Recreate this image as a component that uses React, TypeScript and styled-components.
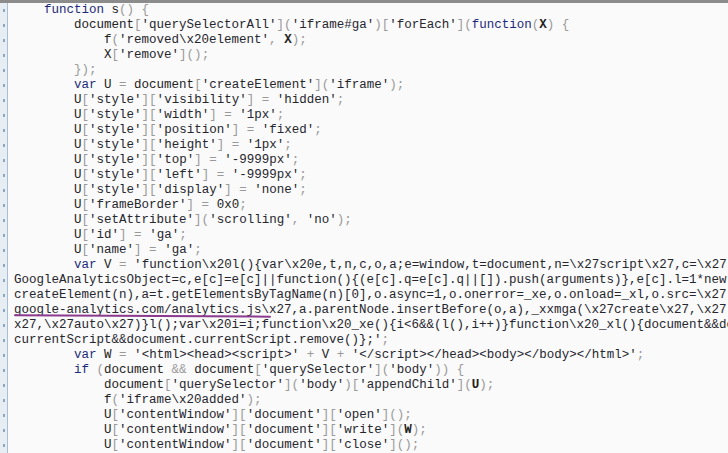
import React from "react";
import styled, { createGlobalStyle, css } from "styled-components";

const Global = createGlobalStyle`
  html, body { margin: 0; padding: 0; background: #fafafa; }
  body { width: 728px; height: 453px; overflow: hidden; }
`;

const Frame = styled.div`
  width: 728px;
  height: 453px;
  box-sizing: border-box;
  border-top: 3px solid #8c8c8c;
  display: flex;
  overflow: hidden;
  background: #fafafa;
`;

const Gutter = styled.div`
  width: 7px;
  flex: none;
  background: #e6edf3;
  border-right: 1px solid #a9bfd3;
  display: flex;
  flex-direction: column;
`;

const Mark = styled.div`
  height: 15px;
  display: flex;
  align-items: center;
  justify-content: center;
  &::before {
    content: "";
    width: 2px;
    height: 3px;
    background: #8fa7bd;
  }
`;

const Code = styled.pre`
  margin: 0;
  padding: 0 0 0 6px;
  flex: 1;
  min-width: 0;
  font-family: "Liberation Mono", "Courier New", monospace;
  font-size: 12.5px;
  line-height: 15px;
  color: #222;
  white-space: pre;
  overflow: hidden;
`;

const Line = styled.div`
  height: 15px;
`;

const Kw = styled.span`
  color: #1c2a7a;
`;

const Str = styled.span`
  color: #26262e;
`;

const Punct = styled.span`
  color: #999;
`;

const Ident = styled.span<{ $bold?: boolean }>`
  color: #222;
  ${(p) =>
    p.$bold &&
    css`
      font-weight: bold;
    `}
`;

const Scribble = styled.span`
  position: relative;
  &::after {
    content: "";
    position: absolute;
    left: 0;
    right: -9px;
    bottom: 0;
    height: 2px;
    border-radius: 1px;
    background: #8b3a8e;
    transform: rotate(0.3deg);
  }
`;

const ind = (n: number) => " ".repeat(n * 4);

const lines: string[] = [
  ind(1) + "function s() {",
  ind(2) + "document['querySelectorAll']('iframe#ga')['forEach'](function(X) {",
  ind(3) + "f('removed\\x20element', X);",
  ind(3) + "X['remove']();",
  ind(2) + "});",
  ind(2) + "var U = document['createElement']('iframe');",
  ind(2) + "U['style']['visibility'] = 'hidden';",
  ind(2) + "U['style']['width'] = '1px';",
  ind(2) + "U['style']['position'] = 'fixed';",
  ind(2) + "U['style']['height'] = '1px';",
  ind(2) + "U['style']['top'] = '-9999px';",
  ind(2) + "U['style']['left'] = '-9999px';",
  ind(2) + "U['style']['display'] = 'none';",
  ind(2) + "U['frameBorder'] = 0x0;",
  ind(2) + "U['setAttribute']('scrolling', 'no');",
  ind(2) + "U['id'] = 'ga';",
  ind(2) + "U['name'] = 'ga';",
  ind(2) +
    "var V = 'function\\x20l(){var\\x20e,t,n,c,o,a;e=window,t=document,n=\\x27script\\x27,c=\\x27",
  "GoogleAnalyticsObject=c,e[c]=e[c]||function(){(e[c].q=e[c].q||[]).push(arguments)},e[c].l=1*new",
  "createElement(n),a=t.getElementsByTagName(n)[0],o.async=1,o.onerror=_xe,o.onload=_xl,o.src=\\x27",
  "google-analytics.com/analytics.js\\x27,a.parentNode.insertBefore(o,a),_xxmga(\\x27create\\x27,\\x27",
  "x27,\\x27auto\\x27)}l();var\\x20i=i;function\\x20_xe(){i<6&&(l(),i++)}function\\x20_xl(){document&&do",
  "currentScript&&document.currentScript.remove()};';",
  ind(2) + "var W = '<html><head><script>' + V + '</script></head><body></body></html>';",
  ind(2) + "if (document && document['querySelector']('body')) {",
  ind(3) + "document['querySelector']('body')['appendChild'](U);",
  ind(3) + "f('iframe\\x20added');",
  ind(3) + "U['contentWindow']['document']['open']();",
  ind(3) + "U['contentWindow']['document']['write'](W);",
  ind(3) + "U['contentWindow']['document']['close']();",
];

type Tok = { kind: "kw" | "str" | "punct" | "id" | "ws"; text: string; bold?: boolean };

const KEYWORDS = new Set(["function", "var", "if"]);

function tokenize(line: string, inString: boolean): { toks: Tok[]; inString: boolean } {
  const toks: Tok[] = [];
  let i = 0;
  let s = inString;
  let lastSig = "";
  while (i < line.length) {
    if (s) {
      let j = i;
      while (j < line.length && line[j] !== "'") j++;
      if (j < line.length) {
        toks.push({ kind: "str", text: line.slice(i, j + 1) });
        s = false;
        i = j + 1;
      } else {
        toks.push({ kind: "str", text: line.slice(i) });
        i = line.length;
      }
      lastSig = "str";
      continue;
    }
    const c = line[i];
    if (c === "'") {
      s = true;
      toks.push({ kind: "str", text: "'" });
      i++;
      continue;
    }
    if (c === " ") {
      let j = i;
      while (j < line.length && line[j] === " ") j++;
      toks.push({ kind: "ws", text: line.slice(i, j) });
      i = j;
      continue;
    }
    if (/[A-Za-z0-9_$]/.test(c)) {
      let j = i;
      while (j < line.length && /[A-Za-z0-9_$]/.test(line[j])) j++;
      const w = line.slice(i, j);
      if (KEYWORDS.has(w)) toks.push({ kind: "kw", text: w });
      else
        toks.push({
          kind: "id",
          text: w,
          bold: /^[A-Z]$/.test(w) && (lastSig === "(" || lastSig === ","),
        });
      lastSig = "id";
      i = j;
      continue;
    }
    toks.push({ kind: "punct", text: c });
    lastSig = c;
    i++;
  }
  return { toks, inString: s };
}

const SCRIBBLE = "google-analytics.com/analytics.js";

function renderTokens(toks: Tok[]) {
  return toks.map((t, k) => {
    switch (t.kind) {
      case "kw":
        return <Kw key={k}>{t.text}</Kw>;
      case "str":
        if (t.text.startsWith(SCRIBBLE)) {
          return (
            <Str key={k}>
              <Scribble>{SCRIBBLE}</Scribble>
              {t.text.slice(SCRIBBLE.length)}
            </Str>
          );
        }
        return <Str key={k}>{t.text}</Str>;
      case "punct":
        return <Punct key={k}>{t.text}</Punct>;
      case "id":
        return (
          <Ident key={k} $bold={t.bold}>
            {t.text}
          </Ident>
        );
      default:
        return <React.Fragment key={k}>{t.text}</React.Fragment>;
    }
  });
}

export default function App() {
  let inStr = false;
  const rendered = lines.map((l, idx) => {
    const { toks, inString } = tokenize(l, inStr);
    inStr = inString;
    return <Line key={idx}>{renderTokens(toks)}</Line>;
  });
  return (
    <>
      <Global />
      <Frame>
        <Gutter>
          {lines.map((_, i) => (
            <Mark key={i} />
          ))}
        </Gutter>
        <Code>{rendered}</Code>
      </Frame>
    </>
  );
}
